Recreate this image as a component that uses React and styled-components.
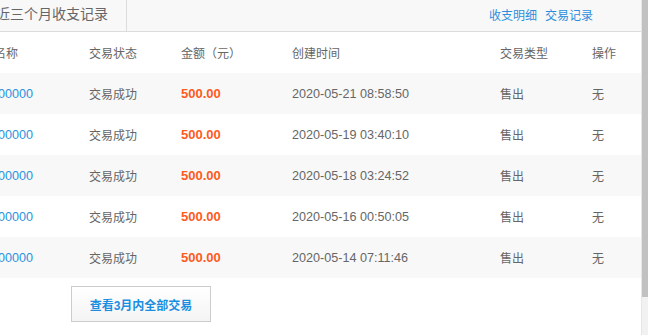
import React from 'react';
import styled, { createGlobalStyle } from 'styled-components';

const GlobalStyle = createGlobalStyle`
  html, body {
    margin: 0;
    padding: 0;
    background: #fff;
    overflow: hidden;
  }
  body {
    font-family: 'Liberation Sans', 'Noto Sans CJK SC', sans-serif;
    font-size: 12px;
    color: #666;
  }
`;

const Page = styled.div`
  display: flex;
  height: 335px;
  margin-left: -30px;
`;

const Panel = styled.div`
  width: 671px;
  border-right: 1px solid #e6e6e6;
  display: flex;
  flex-direction: column;
`;

const Scrollbar = styled.div`
  width: 6px;
  background: #f1f1f1;
  display: flex;
  flex-direction: column;
`;

const Thumb = styled.div`
  height: 297px;
  background: #c1c1c1;
`;

const TopBar = styled.div`
  display: flex;
  align-items: center;
  height: 31px;
  background: #f8f8f8;
  border-bottom: 1px solid #dcdcdc;
`;

const Tab = styled.div`
  height: 31px;
  line-height: 29px;
  padding: 0 18px 0 26px;
  font-size: 14px;
  color: #666;
  border-right: 1px solid #dcdcdc;
`;

const Links = styled.div`
  margin-left: auto;
  margin-right: 48px;
  display: flex;
  gap: 8px;
  padding-bottom: 2px;
  a {
    color: #2b8fdf;
    text-decoration: none;
    font-size: 12px;
  }
`;

const Row = styled.div`
  display: grid;
  grid-template-columns: 119px 92px 111px 208px 92px 49px;
  align-items: center;
  height: 41px;
  background: ${(p) => (p.$striped ? '#f8f8f8' : '#fff')};
  color: #666;
`;

const Id = styled.span`
  color: #2b93e0;
  font-size: 12.6px;
`;

const Time = styled.span`
  font-size: 12.6px;
`;

const Amount = styled.span`
  color: #ff5a1f;
  font-size: 13px;
  font-weight: bold;
`;

const Footer = styled.div`
  padding: 8px 0 0 101px;
`;

const MoreButton = styled.button`
  width: 140px;
  height: 36px;
  border: 1px solid #cccccc;
  background: linear-gradient(#ffffff, #f4f4f4);
  color: #1a8ee0;
  font-family: 'Liberation Sans', 'Noto Sans CJK SC', sans-serif;
  font-size: 12px;
  font-weight: bold;
  cursor: pointer;
`;

const records = [
  { id: '200000000', time: '2020-05-21 08:58:50' },
  { id: '200000000', time: '2020-05-19 03:40:10' },
  { id: '200000000', time: '2020-05-18 03:24:52' },
  { id: '200000000', time: '2020-05-16 00:50:05' },
  { id: '200000000', time: '2020-05-14 07:11:46' },
];

function App() {
  return (
    <>
      <GlobalStyle />
      <Page>
        <Panel>
          <TopBar>
            <Tab>近三个月收支记录</Tab>
            <Links>
              <a href="#">收支明细</a>
              <a href="#">交易记录</a>
            </Links>
          </TopBar>
          <Row>
            <span>商品名称</span>
            <span>交易状态</span>
            <span>金额（元）</span>
            <span>创建时间</span>
            <span>交易类型</span>
            <span>操作</span>
          </Row>
          {records.map((r, i) => (
            <Row key={i} $striped={i % 2 === 0}>
              <Id>{r.id}</Id>
              <span>交易成功</span>
              <Amount>500.00</Amount>
              <Time>{r.time}</Time>
              <span>售出</span>
              <span>无</span>
            </Row>
          ))}
          <Footer>
            <MoreButton>查看3月内全部交易</MoreButton>
          </Footer>
        </Panel>
        <Scrollbar>
          <Thumb />
        </Scrollbar>
      </Page>
    </>
  );
}

export default App;
